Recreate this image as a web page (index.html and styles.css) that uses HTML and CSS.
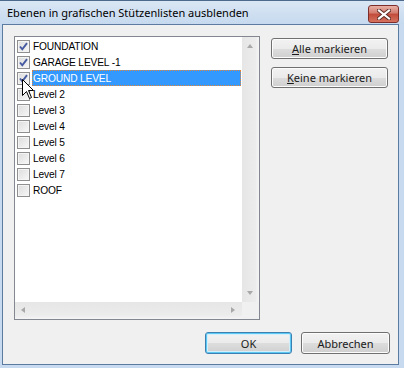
FILE: index.html
```html
<!DOCTYPE html>
<html lang="de">
<head>
  <meta charset="UTF-8">
  <title>Ebenen ausblenden</title>
  <link rel="stylesheet" href="styles.css">
</head>
<body>
  <div class="window">
    <div class="titlebar">
      <span class="title">Ebenen in grafischen Stützenlisten ausblenden</span>
      <div class="close">
        <svg width="14" height="11" viewBox="0 0 14 11">
          <path d="M2 1.5 L12 9.5 M12 1.5 L2 9.5" stroke="#5a2a26" stroke-width="4" stroke-linecap="square"/>
          <path d="M2 1.5 L12 9.5 M12 1.5 L2 9.5" stroke="#fff" stroke-width="2.2" stroke-linecap="square"/>
        </svg>
      </div>
    </div>
    <div class="client">
      <div class="main">
        <div class="listbox">
          <ul class="items">
            <li class="row"><span class="check on"></span><span class="label">FOUNDATION</span></li>
            <li class="row"><span class="check on"></span><span class="label">GARAGE LEVEL -1</span></li>
            <li class="row"><span class="check on"></span><span class="label selected">GROUND LEVEL</span></li>
            <li class="row"><span class="check"></span><span class="label">Level 2</span></li>
            <li class="row"><span class="check"></span><span class="label">Level 3</span></li>
            <li class="row"><span class="check"></span><span class="label">Level 4</span></li>
            <li class="row"><span class="check"></span><span class="label">Level 5</span></li>
            <li class="row"><span class="check"></span><span class="label">Level 6</span></li>
            <li class="row"><span class="check"></span><span class="label">Level 7</span></li>
            <li class="row"><span class="check"></span><span class="label">ROOF</span></li>
          </ul>
          <div class="vscroll">
            <span class="arrow up"></span>
            <span class="arrow down"></span>
          </div>
          <div class="hscroll">
            <span class="arrow left"></span>
            <span class="arrow right"></span>
          </div>
          <div class="corner"></div>
        </div>
        <div class="side">
          <button class="btn wide"><u>A</u>lle markieren</button>
          <button class="btn wide"><u>K</u>eine markieren</button>
        </div>
      </div>
      <div class="footer">
        <button class="btn ok">OK</button>
        <button class="btn cancel">Abbrechen</button>
      </div>
    </div>
    <svg class="cursor" width="13" height="20" viewBox="0 0 13 20">
      <polygon points="0.5,0.5 0.5,16.5 4.5,12.5 7.5,19.5 9.5,18.5 6.5,11.5 11.5,11.5" fill="#fff" stroke="#000" stroke-width="1"/>
    </svg>
  </div>
</body>
</html>
```

FILE: styles.css
```css
body {
  margin: 0;
  background: #f0f0f0;
}
.window {
  position: relative;
  width: 404px;
  height: 368px;
  box-sizing: border-box;
  background: #c7daef;
  border-top: 1px solid #4d6a8c;
  padding: 0 5px 3px 2px;
  display: flex;
  flex-direction: column;
}
.titlebar {
  height: 23px;
  display: flex;
  justify-content: space-between;
  background: linear-gradient(#dae7f5, #c6d9ee);
  margin: 0 -5px 0 -2px;
  padding: 0 5px 0 7px;
}
.title {
  font-family: "Noto Sans", sans-serif;
  font-size: 11px;
  line-height: 24px;
  color: #000;
}
.close {
  width: 29px;
  height: 16px;
  margin-top: 4px;
  border: 1px solid #7d2d2a;
  border-radius: 3px;
  background: linear-gradient(#e8b0a6, #d27a6c 45%, #c24a3a 50%, #d5735f);
  display: flex;
  align-items: center;
  justify-content: center;
}
.client {
  flex: 1;
  background: #f0f0f0;
  border: 1px solid #5b7ba0;
  display: flex;
  flex-direction: column;
  padding: 11px 8px 10px 11px;
}
.main {
  flex: 1;
  display: flex;
}
.listbox {
  width: 246px;
  height: 284px;
  box-sizing: border-box;
  border: 1px solid #828790;
  background: #fff;
  display: grid;
  grid-template-columns: 1fr 17px;
  grid-template-rows: 1fr 17px;
}
.items {
  list-style: none;
  margin: 0;
  padding: 1px 1px 0 2px;
  font-family: "Liberation Sans", Arial, sans-serif;
  font-size: 10.2px;
  letter-spacing: -0.15px;
}
.row {
  display: flex;
  height: 16px;
  line-height: 17px;
}
.check {
  width: 11px;
  height: 11px;
  margin-top: 2px;
  border: 1px solid #8f8f8f;
  background: linear-gradient(135deg, #dcdcdc, #f8f8f8);
  box-shadow: inset 0 0 0 1px #f4f4f4;
  flex-shrink: 0;
}
.check.on {
  background: url("data:image/svg+xml,%3Csvg xmlns='http://www.w3.org/2000/svg' width='11' height='11'%3E%3Cpath d='M2 5.5 L4.3 8.3 L9 2.2' fill='none' stroke='%23455aa0' stroke-width='1.9'/%3E%3C/svg%3E"), linear-gradient(135deg, #dcdcdc, #f8f8f8);
}
.label {
  flex: 1;
  margin-left: 2px;
  padding: 0 1px;
  color: #000;
  white-space: nowrap;
}
.label.selected {
  background: #3399ff;
  color: #fff;
  outline: 1px dotted #e0843a;
  outline-offset: -1px;
}
.vscroll {
  position: relative;
  background: linear-gradient(to right, #e6e6e6, #ececec 80%, #f5f5f5);
}
.hscroll {
  position: relative;
  background: linear-gradient(#e6e6e6, #ececec 80%, #f5f5f5);
}
.corner {
  background: #f0f0f0;
}
.arrow {
  position: absolute;
  width: 0;
  height: 0;
  border: 3px solid transparent;
}
.arrow.up {
  top: 7px;
  left: 5px;
  border-bottom: 4px solid #a8a8a8;
  border-top-width: 0;
}
.arrow.down {
  bottom: 7px;
  left: 5px;
  border-top: 4px solid #a8a8a8;
  border-bottom-width: 0;
}
.arrow.left {
  left: 6px;
  top: 5px;
  border-right: 4px solid #a8a8a8;
  border-left-width: 0;
}
.arrow.right {
  right: 7px;
  top: 5px;
  border-left: 4px solid #a8a8a8;
  border-right-width: 0;
}
.side {
  display: flex;
  flex-direction: column;
  gap: 8px;
  margin-left: 11px;
  padding-top: 2px;
}
.btn {
  font-family: "Noto Sans", sans-serif;
  font-size: 11px;
  font-weight: 400;
  color: #1a1a1a;
  padding: 0;
  border: 1px solid #707070;
  border-radius: 3px;
  background: linear-gradient(#f2f2f2, #ebebeb 50%, #dddddd 51%, #cfcfcf);
  box-shadow: inset 0 0 0 1px #fcfcfc;
}
.wide {
  width: 117px;
  height: 21px;
}
.footer {
  display: flex;
  justify-content: flex-end;
  gap: 9px;
  margin-top: 12px;
}
.ok {
  width: 87px;
  height: 22px;
  border-color: #3c7fb1;
  box-shadow: inset 0 0 0 1px #5ac8f2, inset 0 0 0 2px #d2effb;
}
.cancel {
  width: 89px;
  height: 22px;
}
.cursor {
  position: absolute;
  left: 22px;
  top: 78px;
}
```
